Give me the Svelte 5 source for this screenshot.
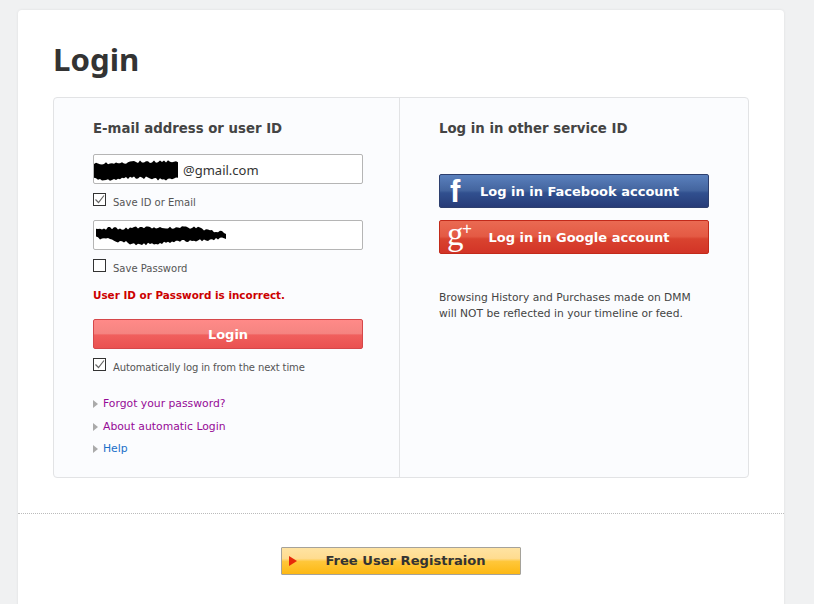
<script>
	const links = [
		{ label: 'Forgot your password?', visited: true },
		{ label: 'About automatic Login', visited: true },
		{ label: 'Help', visited: false }
	];

	// rough marker scribble over the private bits, jagged edges on purpose
	function scribble(width, top, bottom, seed) {
		let n = seed;
		const rand = () => {
			n = (n * 16807) % 2147483647;
			return (n % 1000) / 1000;
		};
		let upper = '';
		let lower = '';
		for (let x = 0; x <= width; x += 2) {
			const t = top(x) + rand() * 3;
			const b = bottom(x) - rand() * 3;
			upper += `L${x} ${t.toFixed(1)} `;
			lower = `L${x} ${b.toFixed(1)} ` + lower;
		}
		return 'M' + upper.slice(1) + lower + 'Z';
	}

	const emailBlob = scribble(
		85,
		(x) => 5 - Math.min(x, 60) / 30,
		(x) => 23 + Math.sin(x / 9),
		7
	);
	const passBlob = scribble(
		130,
		(x) => 4 - x / 100 + (x > 100 ? (x - 100) / 5 : 0),
		(x) => (x < 40 ? 16 + x / 6 : 23 - (x - 40) / 15),
		23
	);
</script>

<div class="page">
	<main class="card">
		<section class="top">
			<h1>Login</h1>
			<div class="panel">
				<div class="col left">
					<h2>E-mail address or user ID</h2>
					<div class="field">
						<svg class="blob" width="85" height="24" viewBox="0 0 85 24">
							<path d={emailBlob} fill="#000" />
						</svg>
						<span class="email">@gmail.com</span>
					</div>
					<label class="check first">
						<span class="box">
							<svg width="13" height="13" viewBox="0 0 13 13"><path d="M2.5 6.5 L5.5 9.5 L11 2.5" fill="none" stroke="#666" stroke-width="1.2" /></svg>
						</span>
						<span>Save ID or Email</span>
					</label>
					<div class="field second">
						<svg class="blob pw" width="130" height="24" viewBox="0 0 130 24">
							<path d={passBlob} fill="#000" />
						</svg>
					</div>
					<label class="check first">
						<span class="box"></span>
						<span>Save Password</span>
					</label>
					<p class="error">User ID or Password is incorrect.</p>
					<button class="login">Login</button>
					<label class="check auto">
						<span class="box">
							<svg width="13" height="13" viewBox="0 0 13 13"><path d="M2.5 6.5 L5.5 9.5 L11 2.5" fill="none" stroke="#666" stroke-width="1.2" /></svg>
						</span>
						<span>Automatically log in from the next time</span>
					</label>
					<ul class="links">
						{#each links as link}
							<li><a href="#top" class:visited={link.visited}>{link.label}</a></li>
						{/each}
					</ul>
				</div>
				<div class="col right">
					<h2>Log in in other service ID</h2>
					<button class="social fb">
						<span class="glyph f">f</span>
						<span class="social-label">Log in in Facebook account</span>
					</button>
					<button class="social gp">
						<span class="glyph g">g<span class="plus">+</span></span>
						<span class="social-label">Log in in Google account</span>
					</button>
					<p class="note">Browsing History and Purchases made on DMM<br />will NOT be reflected in your timeline or feed.</p>
				</div>
			</div>
		</section>
		<section class="foot">
			<button class="register">Free User Registraion</button>
		</section>
	</main>
</div>

<style>
	:global(body) {
		background: #f0f1f2;
		overflow: hidden;
	}
	.page {
		height: 604px;
		padding: 10px 30px 0 18px;
		box-sizing: border-box;
		font-family: 'DejaVu Sans', sans-serif;
		color: #333;
		overflow: hidden;
	}
	.card {
		background: #fff;
		border-radius: 4px;
		box-shadow: 0 0 3px rgba(0, 0, 0, 0.08);
		height: 640px;
	}
	.top {
		padding: 29px 35px 35px;
		border-bottom: 1px dotted #bbb;
	}
	h1 {
		margin: 0 0 18px;
		font: 700 31.2px/40px 'Noto Sans', sans-serif;
		color: #333;
	}
	.panel {
		display: grid;
		grid-template-columns: 346px 1fr;
		height: 379px;
		background: #fbfcfe;
		border: 1px solid #e2e3e5;
		border-radius: 4px;
	}
	.col {
		padding: 23px 39px 0;
	}
	.left {
		border-right: 1px solid #e2e3e5;
	}
	h2 {
		margin: 0;
		font-size: 13.3px;
		line-height: 16px;
		font-weight: 700;
		color: #444;
	}
	.field {
		display: flex;
		align-items: center;
		box-sizing: border-box;
		width: 270px;
		height: 30px;
		margin-top: 17px;
		background: #fff;
		border: 1px solid #b5b5b5;
		border-radius: 2px;
		overflow: hidden;
	}
	.field.second {
		margin-top: 11px;
		padding-left: 2px;
	}
	.email {
		margin-left: 4px;
		padding-top: 1px;
		font: 13px 'Noto Sans', sans-serif;
		color: #333;
	}
	.blob {
		flex: none;
	}
	.check {
		display: flex;
		align-items: flex-end;
		gap: 7px;
		height: 16px;
		margin-top: 9px;
		font-size: 10px;
		line-height: 12px;
		color: #555;
	}
	.box {
		display: block;
		box-sizing: border-box;
		width: 13px;
		height: 13px;
		margin-bottom: 3px;
		border: 1px solid #333;
		background: #fff;
	}
	.box svg {
		display: block;
		margin: -1px;
	}
	.error {
		margin: 13px 0 0;
		font-size: 10.4px;
		line-height: 14px;
		font-weight: 700;
		color: #c00;
	}
	.login {
		display: block;
		width: 270px;
		height: 30px;
		margin-top: 17px;
		padding: 0;
		border: 1px solid #d5474a;
		border-radius: 2px;
		background: linear-gradient(#ff8a88 0, #f58481 48%, #f05f5d 54%, #ea5150 100%);
		color: #fff;
		font: 700 13px 'DejaVu Sans', sans-serif;
	}
	.auto {
		margin-top: 9px;
		letter-spacing: -0.13px;
	}
	.links {
		list-style: none;
		margin: 19px 0 0;
		padding: 0;
		font-size: 10.8px;
		line-height: 22.5px;
	}
	.links li {
		position: relative;
		padding-left: 10px;
	}
	.links li::before {
		content: '';
		position: absolute;
		left: 0;
		top: 7px;
		border-left: 5px solid #aaa;
		border-top: 4px solid transparent;
		border-bottom: 4px solid transparent;
	}
	.links a {
		color: #1a6fc9;
		text-decoration: none;
	}
	.links a.visited {
		color: #960a96;
	}
	.social {
		position: relative;
		display: block;
		box-sizing: border-box;
		width: 270px;
		height: 34px;
		padding: 0;
		color: #fff;
		border-radius: 2px;
		font: 700 13px 'DejaVu Sans', sans-serif;
		text-align: center;
	}
	.fb {
		margin-top: 37px;
		border: 1px solid #2d3f6e;
		background: linear-gradient(#5a80bd, #44659f 48%, #31508f 56%, #273c78);
	}
	.gp {
		margin-top: 12px;
		border: 1px solid #c22a1a;
		background: linear-gradient(#ea6a52, #e45a44 48%, #d9432f 56%, #d23427);
	}
	.social-label {
		display: block;
	}
	.fb .social-label {
		padding-left: 11px;
	}
	.gp .social-label {
		padding-left: 10px;
	}
	.glyph {
		position: absolute;
		color: #fff;
	}
	.f {
		left: 10px;
		top: 0;
		font: 700 31px/34px 'Liberation Sans', sans-serif;
	}
	.g {
		left: 7px;
		top: -2px;
		font: 400 33px/30px 'Liberation Serif', serif;
	}
	.plus {
		position: absolute;
		left: 15px;
		top: 1px;
		font: 400 17px/17px 'Liberation Sans', sans-serif;
	}
	.note {
		margin: 36px 0 0;
		font-size: 10.7px;
		line-height: 16px;
		color: #444;
	}
	.foot {
		display: flex;
		justify-content: center;
		padding-top: 33px;
	}
	.register {
		width: 240px;
		height: 28px;
		padding: 0 0 2px 9px;
		border: 1px solid #a5a29a;
		border-radius: 1px;
		background: linear-gradient(#ffe3a2, #ffdc90 40%, #ffc73a 52%, #fdb813);
		color: #333;
		font: 700 13.1px 'DejaVu Sans', sans-serif;
		position: relative;
	}
	.register::before {
		content: '';
		position: absolute;
		left: 7px;
		top: 8px;
		border-left: 8px solid #e62a0a;
		border-top: 5px solid transparent;
		border-bottom: 5px solid transparent;
	}
</style>
